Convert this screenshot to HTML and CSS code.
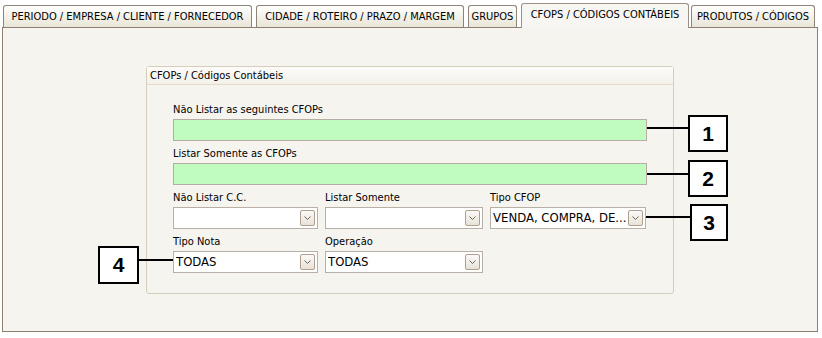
FILE: index.html
```html
<!DOCTYPE html>
<html lang="pt-BR">
<head>
    <meta charset="UTF-8">
    <title>CFOPs / Códigos Contábeis</title>
    <link rel="stylesheet" href="styles.css">
</head>
<body>
    <div class="tabs">
        <div class="tab tab-periodo">PERIODO / EMPRESA / CLIENTE / FORNECEDOR</div>
        <div class="tab tab-cidade">CIDADE / ROTEIRO / PRAZO / MARGEM</div>
        <div class="tab tab-grupos">GRUPOS</div>
        <div class="tab tab-cfops active">CFOPS / CÓDIGOS CONTÁBEIS</div>
        <div class="tab tab-produtos">PRODUTOS / CÓDIGOS</div>
    </div>

    <div class="panel">
        <div class="group">
            <div class="group-title">CFOPs / Códigos Contábeis</div>
            <div class="group-body">
                <div class="field">
                    <label>Não Listar as seguintes CFOPs</label>
                    <div class="input green wide"></div>
                </div>
                <div class="field">
                    <label>Listar Somente as CFOPs</label>
                    <div class="input green wide"></div>
                </div>
                <div class="row">
                    <div class="field">
                        <label>Não Listar C.C.</label>
                        <div class="select small"><span class="value"></span><span class="drop"><svg width="7" height="4" viewBox="0 0 7 4"><path d="M0.5 0.5 L3.5 3.5 L6.5 0.5" fill="none" stroke="#6b6259" stroke-width="1"/></svg></span></div>
                    </div>
                    <div class="field">
                        <label>Listar Somente</label>
                        <div class="select medium"><span class="value"></span><span class="drop"><svg width="7" height="4" viewBox="0 0 7 4"><path d="M0.5 0.5 L3.5 3.5 L6.5 0.5" fill="none" stroke="#6b6259" stroke-width="1"/></svg></span></div>
                    </div>
                    <div class="field">
                        <label>Tipo CFOP</label>
                        <div class="select tipo"><span class="value">VENDA, COMPRA, DE...</span><span class="drop"><svg width="7" height="4" viewBox="0 0 7 4"><path d="M0.5 0.5 L3.5 3.5 L6.5 0.5" fill="none" stroke="#6b6259" stroke-width="1"/></svg></span></div>
                    </div>
                </div>
                <div class="row">
                    <div class="field">
                        <label>Tipo Nota</label>
                        <div class="select small"><span class="value">TODAS</span><span class="drop"><svg width="7" height="4" viewBox="0 0 7 4"><path d="M0.5 0.5 L3.5 3.5 L6.5 0.5" fill="none" stroke="#6b6259" stroke-width="1"/></svg></span></div>
                    </div>
                    <div class="field">
                        <label>Operação</label>
                        <div class="select medium"><span class="value">TODAS</span><span class="drop"><svg width="7" height="4" viewBox="0 0 7 4"><path d="M0.5 0.5 L3.5 3.5 L6.5 0.5" fill="none" stroke="#6b6259" stroke-width="1"/></svg></span></div>
                    </div>
                </div>
            </div>
        </div>

        <!-- callouts -->
        <div class="leader leader-1"></div>
        <div class="callout callout-1">1</div>
        <div class="leader leader-2"></div>
        <div class="callout callout-2">2</div>
        <div class="leader leader-3"></div>
        <div class="callout callout-3">3</div>
        <div class="leader leader-4"></div>
        <div class="callout callout-4">4</div>
    </div>
</body>
</html>
```

FILE: styles.css
```css
body {
    margin: 0;
    background: #ffffff;
    font-family: "DejaVu Sans Condensed", "DejaVu Sans", sans-serif;
    font-size: 11px;
    color: #000;
}

.tabs {
    display: flex;
    align-items: flex-end;
    height: 27px;
    padding-left: 3px;
    position: relative;
    z-index: 2;
}

.tab {
    box-sizing: border-box;
    height: 22px;
    margin-right: 4px;
    border: 1px solid #8f8478;
    border-bottom: none;
    border-radius: 3px 3px 0 0;
    background: linear-gradient(#ffffff, #f1efe6 60%, #e9e5d8);
    text-align: center;
    line-height: 21px;
    white-space: nowrap;
}

.tab-periodo { width: 249px; }
.tab-cidade { width: 208px; }
.tab-grupos { width: 49px; }
.tab-cfops { width: 168px; }
.tab-produtos { width: 124px; margin-right: 0; }

.tab.active {
    height: 25px;
    margin-bottom: -1px;
    margin-right: 2px;
    background: #f7f6f2;
    line-height: 22px;
    border-color: #9a9087;
}

.panel {
    position: relative;
    box-sizing: border-box;
    height: 305px;
    margin: 0 4px 0 2px;
    padding: 38px 0 0 143px;
    border: 1px solid #8f7f70;
    background: #f5f4ef;
}

.group {
    box-sizing: border-box;
    width: 528px;
    height: 228px;
    border: 1px solid #d6cdbd;
    border-radius: 3px;
    background: #f5f4ef;
}

.group-title {
    height: 17px;
    padding-left: 3px;
    line-height: 17px;
    background: linear-gradient(#fcfbf9, #f3f1ea);
    border-bottom: 1px solid #e6dcc6;
}

.group-body {
    padding: 12px 0 0 26px;
}

.row {
    display: flex;
    gap: 7px;
}

.field label {
    display: block;
    padding-top: 6px;
    margin-bottom: 2px;
    line-height: 14px;
}

.input {
    box-sizing: border-box;
    height: 22px;
    border: 1px solid #b5aca4;
}

.green {
    background: #c0fcc0;
}

.wide {
    width: 474px;
}

.select {
    box-sizing: border-box;
    display: flex;
    align-items: center;
    height: 22px;
    padding: 0 2px 0 2px;
    border: 1px solid #b8b0a6;
    background: #ffffff;
    font-size: 13px;
}

.select.small { width: 145px; }
.select.medium { width: 158px; }
.select.tipo { width: 156px; }

.select .value {
    flex: 1;
    white-space: nowrap;
    overflow: hidden;
    line-height: 18px;
}

.drop {
    box-sizing: border-box;
    display: flex;
    align-items: center;
    justify-content: center;
    width: 15px;
    height: 16px;
    border: 1px solid #b09f8d;
    border-radius: 2px;
    background: linear-gradient(#fbfaf8, #e8e2d8);
}

.leader {
    position: absolute;
    height: 2px;
    background: #000;
}

.leader-1 { left: 644px; top: 99px; width: 42px; }
.leader-2 { left: 644px; top: 145px; width: 42px; }
.leader-3 { left: 643px; top: 188px; width: 45px; }
.leader-4 { left: 136px; top: 231px; width: 34px; }

.callout {
    position: absolute;
    box-sizing: border-box;
    width: 40px;
    height: 37px;
    border: 2px solid #000;
    background: #fff;
    font-family: "Liberation Sans", Arial, sans-serif;
    font-weight: bold;
    font-size: 21px;
    line-height: 33px;
    text-align: center;
}

.callout-1 { left: 685px; top: 87px; }
.callout-2 { left: 685px; top: 132px; }
.callout-3 { left: 687px; top: 176px; width: 38px; }
.callout-4 { left: 95px; top: 218px; width: 41px; height: 38px; line-height: 34px; }
```
